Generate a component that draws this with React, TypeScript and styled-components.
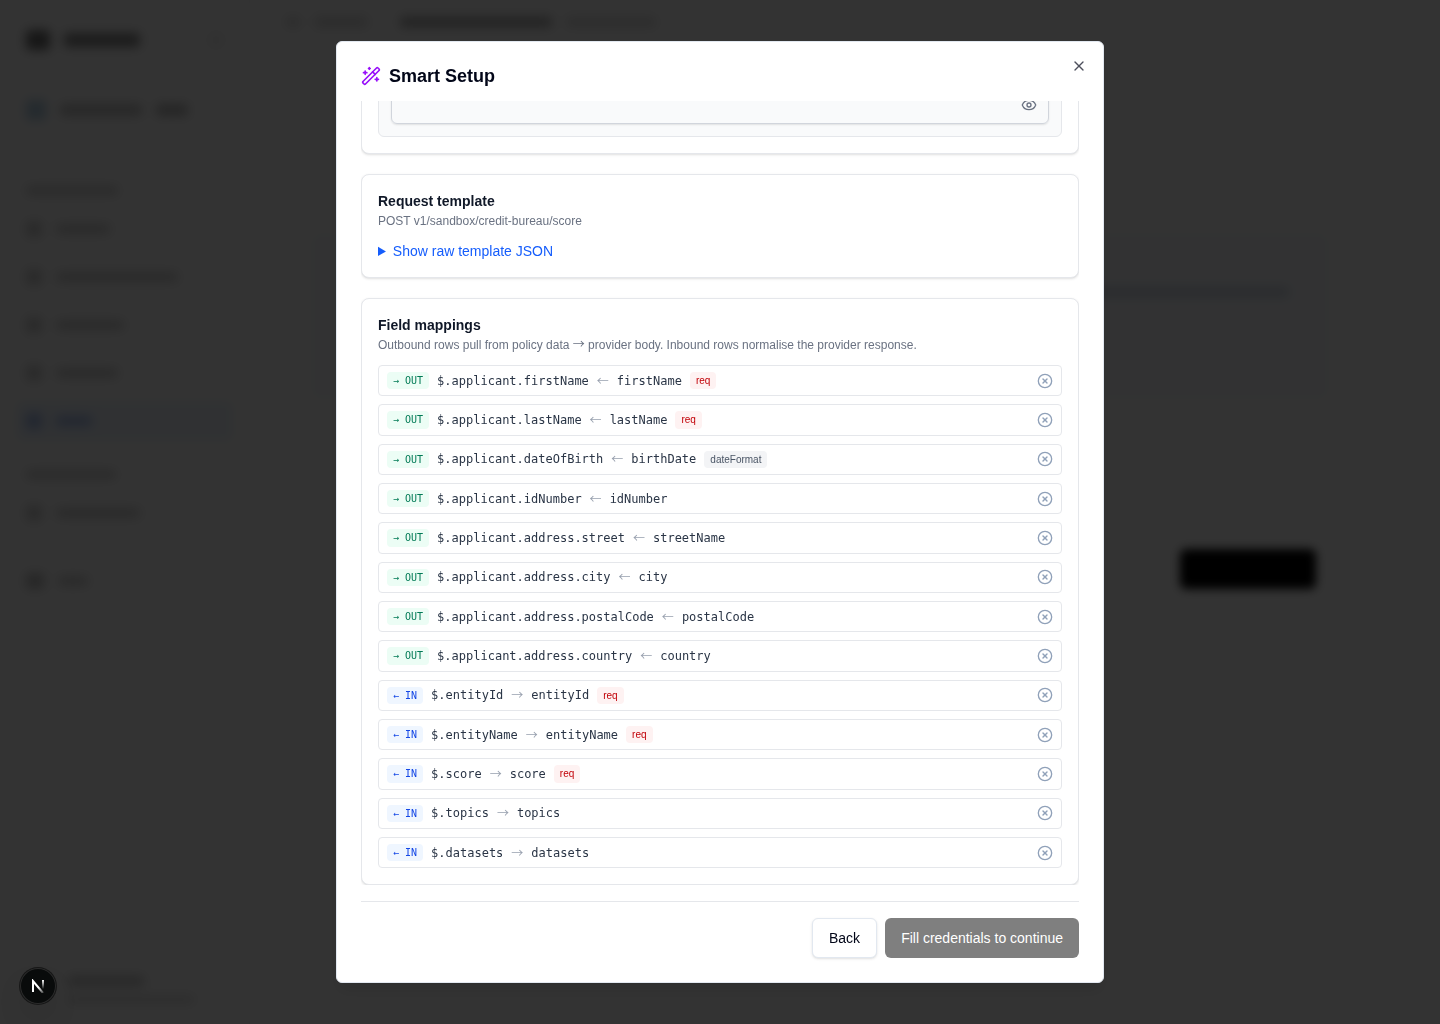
import React, { useLayoutEffect, useRef } from "react";
import styled, { createGlobalStyle } from "styled-components";
import { CircleX, Eye, WandSparkles, X } from "lucide-react";

const SANS = `"Liberation Sans", Arial, sans-serif`;
const MONO = `"DejaVu Sans Mono", "Liberation Mono", monospace`;
const SYMBOLS = `"Noto Sans CJK JP", "Liberation Sans", sans-serif`;

const GlobalStyle = createGlobalStyle`
  *, *::before, *::after { box-sizing: border-box; }
  body { margin: 0; background: #fff; font-family: ${SANS}; font-size: 14px; line-height: 20px; color: #101828; }
  h2, h3, p, ul { margin: 0; padding: 0; }
  button, input { font: inherit; }
`;

/* ---------- page behind the dialog ---------- */

const Page = styled.div`
  display: flex;
  height: 100vh;
  overflow: hidden;
  background: #fff;
`;

const Sidebar = styled.aside`
  display: flex;
  flex-direction: column;
  width: 250px;
  padding: 24px 16px 16px;
  border-right: 1px solid #f3f4f6;
`;

const Line = styled.div<{ $h: number; $active?: boolean; $top?: number }>`
  display: flex;
  align-items: center;
  gap: 14px;
  height: ${(p) => p.$h}px;
  margin-top: ${(p) => p.$top ?? 0}px;
  padding: 0 10px;
  border-radius: 8px;
  background: ${(p) => (p.$active ? "#eff6ff" : "transparent")};
`;

const Blob = styled.span<{ $w: number; $h?: number; $c?: string }>`
  flex: none;
  width: ${(p) => p.$w}px;
  height: ${(p) => p.$h ?? 10}px;
  border-radius: 4px;
  background: ${(p) => p.$c ?? "#d0d0d0"};
  filter: blur(3px);
`;

const Grow = styled.span`
  flex: 1;
`;

const Main = styled.main`
  flex: 1;
  display: flex;
  flex-direction: column;
`;

const TopBar = styled.header`
  display: flex;
  align-items: center;
  gap: 14px;
  height: 44px;
  padding: 0 36px;
`;

const Body = styled.div`
  display: flex;
  flex-direction: column;
  gap: 28px;
  padding: 188px 110px 0 60px;
`;

const Panel = styled.section<{ $h: number; $bg?: string }>`
  display: flex;
  flex-direction: column;
  align-items: flex-end;
  height: ${(p) => p.$h}px;
  padding: 54px 40px 0;
  border: 1px solid #fafafa;
  border-radius: 12px;
  background: ${(p) => p.$bg ?? "#fff"};
`;

const PanelAction = styled.span`
  width: 136px;
  height: 40px;
  margin: 66px -27px 0 0;
  border-radius: 6px;
  background: #000;
  filter: blur(2px);
`;

/* ---------- dialog ---------- */

const Overlay = styled.div`
  position: fixed;
  inset: 0;
  display: flex;
  align-items: center;
  justify-content: center;
  background: rgba(0, 0, 0, 0.8);
  backdrop-filter: blur(4px);
`;

const Dialog = styled.div`
  position: relative;
  display: flex;
  flex-direction: column;
  width: 100%;
  max-width: 768px;
  height: 92vh;
  padding: 24px;
  border: 1px solid #e2e8f0;
  border-radius: 6px;
  background: #fff;
  box-shadow: 0 10px 15px -3px rgba(0, 0, 0, 0.1);
`;

const DialogHeader = styled.div`
  display: flex;
  align-items: center;
  gap: 8px;
  height: 20px;
  margin-bottom: 15px;
  color: #9810fa;
`;

const DialogTitle = styled.h2`
  font-size: 18px;
  line-height: 20px;
  font-weight: 700;
  color: #020618;
`;

const IconButton = styled.button`
  display: flex;
  padding: 0;
  border: 0;
  background: transparent;
  color: #90a1b9;
  cursor: pointer;
`;

const CloseButton = styled(IconButton)`
  position: absolute;
  top: 16px;
  right: 16px;
  color: #020618;
  opacity: 0.7;
`;

const ScrollArea = styled.div`
  flex: 1;
  min-height: 0;
  display: flex;
  flex-direction: column;
  gap: 20px;
  overflow-y: auto;
  scrollbar-width: none;
`;

const Card = styled.section`
  flex: none;
  padding: 16px;
  border: 1px solid #e5e7eb;
  border-radius: 8px;
  background: #fff;
  box-shadow: 0 1px 3px rgba(0, 0, 0, 0.1), 0 1px 2px -1px rgba(0, 0, 0, 0.1);
`;

const CardTitle = styled.h3`
  font-size: 14px;
  line-height: 20px;
  font-weight: 700;
`;

const CardNote = styled.p`
  margin: 2px 0 12px;
  font-size: 12px;
  line-height: 16px;
  color: #6a7282;
`;

const Raw = styled.details`
  font-size: 14px;
  line-height: 20px;
  color: #155dfc;
  summary { cursor: pointer; }
`;

const FieldGroup = styled.div`
  padding: 12px;
  border: 1px solid #e5e7eb;
  border-radius: 6px;
  background: #f9fafb;
`;

const SecretField = styled.div`
  display: flex;
  align-items: center;
  height: 38px;
  padding-right: 11px;
  border: 1px solid #d1d5dc;
  border-radius: 6px;
  box-shadow: 0 1px 2px rgba(0, 0, 0, 0.1);

  button { color: #6a7282; }
`;

const SecretInput = styled.input`
  flex: 1;
  min-width: 0;
  padding: 8px 12px;
  border: 0;
  outline: 0;
  background: transparent;
`;

const Rows = styled.ul`
  display: flex;
  flex-direction: column;
  gap: 8px;
  list-style: none;
`;

const Row = styled.li`
  display: flex;
  align-items: center;
  gap: 8px;
  padding: 6px 8px;
  border: 1px solid #e5e7eb;
  border-radius: 4px;
  font-size: 12px;
  line-height: calc(4 / 3);

  button { margin-left: auto; }
`;

const tones = {
  out: { bg: "#ecfdf5", fg: "#007a55" },
  in: { bg: "#eff6ff", fg: "#1447e6" },
  req: { bg: "#fef2f2", fg: "#c10007" },
  format: { bg: "#f3f4f6", fg: "#4a5565" },
};

const Chip = styled.span<{ $tone: keyof typeof tones; $mono?: boolean }>`
  padding: 2px 6px;
  border-radius: 4px;
  font-family: ${(p) => (p.$mono ? MONO : SANS)};
  font-size: 10px;
  background: ${(p) => tones[p.$tone].bg};
  color: ${(p) => tones[p.$tone].fg};
`;

const Path = styled.code`
  font-family: ${MONO};
  font-size: 12px;
  color: #2a3546;
`;

const Arrow = styled.span`
  font-family: ${SYMBOLS};
  line-height: 16px;
  color: #99a1af;
`;

const InlineArrow = styled.span`
  font-family: ${SYMBOLS};
  line-height: 1;
`;

const Footer = styled.div`
  display: flex;
  justify-content: flex-end;
  gap: 8px;
  margin-top: 16px;
  padding-top: 16px;
  border-top: 1px solid #e5e7eb;
`;

const Button = styled.button<{ $primary?: boolean }>`
  height: 40px;
  padding: 0 16px;
  border: ${(p) => (p.$primary ? "0" : "1px solid #e2e8f0")};
  border-radius: 6px;
  font-size: 14px;
  line-height: 20px;
  background: ${(p) => (p.$primary ? "#000" : "#fff")};
  color: ${(p) => (p.$primary ? "#fff" : "#020618")};
  box-shadow: ${(p) => (p.$primary ? "none" : "0 1px 3px rgba(0, 0, 0, 0.1), 0 1px 2px -1px rgba(0, 0, 0, 0.1)")};

  &:disabled { opacity: 0.5; }
`;

const DevBadge = styled.button`
  position: fixed;
  left: 20px;
  bottom: 20px;
  display: flex;
  align-items: center;
  justify-content: center;
  width: 36px;
  height: 36px;
  padding: 0;
  border: 0;
  border-radius: 50%;
  background: #090b0b;
  box-shadow: 0 0 0 1px #171717, inset 0 0 0 1px #2b2b2b, 0 16px 32px -8px rgba(0, 0, 0, 0.24);
`;

type Mapping = { dir: "out" | "in"; path: string; field: string; required?: boolean; format?: string };

const mappings: Mapping[] = [
  { dir: "out", path: "$.applicant.firstName", field: "firstName", required: true },
  { dir: "out", path: "$.applicant.lastName", field: "lastName", required: true },
  { dir: "out", path: "$.applicant.dateOfBirth", field: "birthDate", format: "dateFormat" },
  { dir: "out", path: "$.applicant.idNumber", field: "idNumber" },
  { dir: "out", path: "$.applicant.address.street", field: "streetName" },
  { dir: "out", path: "$.applicant.address.city", field: "city" },
  { dir: "out", path: "$.applicant.address.postalCode", field: "postalCode" },
  { dir: "out", path: "$.applicant.address.country", field: "country" },
  { dir: "in", path: "$.entityId", field: "entityId", required: true },
  { dir: "in", path: "$.entityName", field: "entityName", required: true },
  { dir: "in", path: "$.score", field: "score", required: true },
  { dir: "in", path: "$.topics", field: "topics" },
  { dir: "in", path: "$.datasets", field: "datasets" },
];

function MappingRow({ dir, path, field, required, format }: Mapping) {
  const out = dir === "out";
  return (
    <Row>
      <Chip $tone={dir} $mono>{out ? "→ OUT" : "← IN"}</Chip>
      <Path>{path}</Path>
      <Arrow>{out ? "←" : "→"}</Arrow>
      <Path>{field}</Path>
      {required && <Chip $tone="req">req</Chip>}
      {format && <Chip $tone="format">{format}</Chip>}
      <IconButton type="button" aria-label={`Remove ${field}`}>
        <CircleX size={16} />
      </IconButton>
    </Row>
  );
}

function Backdrop() {
  return (
    <Page aria-hidden="true">
      <Sidebar>
        <Line $h={32}><Blob $w={24} $h={20} $c="#707070" /><Blob $w={76} $h={14} $c="#8a8a8a" /><Grow /><Blob $w={14} $h={14} $c="#f0f0f0" /></Line>
        <Line $h={52} $top={28}><Blob $w={20} $h={20} $c="#b4d2e6" /><Blob $w={82} $h={12} $c="#c4c4c4" /><Blob $w={32} $h={12} $c="#bababa" /></Line>
        <Line $h={24} $top={42}><Blob $w={92} $h={9} /></Line>
        <Line $h={40} $top={7}><Blob $w={16} $h={16} /><Blob $w={54} /></Line>
        <Line $h={40} $top={8}><Blob $w={16} $h={16} /><Blob $w={122} /></Line>
        <Line $h={40} $top={8}><Blob $w={16} $h={16} /><Blob $w={68} /></Line>
        <Line $h={40} $top={8}><Blob $w={16} $h={16} /><Blob $w={62} /></Line>
        <Line $h={40} $top={8} $active><Blob $w={16} $h={16} $c="#a8bff0" /><Blob $w={36} $c="#a8bff0" /></Line>
        <Line $h={24} $top={21}><Blob $w={90} $h={9} /></Line>
        <Line $h={40} $top={7}><Blob $w={16} $h={16} /><Blob $w={84} /></Line>
        <Line $h={40} $top={28}><Blob $w={18} $h={16} $c="#c0c0c0" /><Blob $w={30} /></Line>
        <Grow />
        <Line $h={18}><Blob $w={28} $h={1} $c="transparent" /><Blob $w={76} $c="#c4c4c4" /></Line>
        <Line $h={18}><Blob $w={28} $h={1} $c="transparent" /><Blob $w={126} $h={7} $c="#d8d8d8" /></Line>
      </Sidebar>
      <Main>
        <TopBar>
          <Blob $w={14} $c="#d8d8d8" /><Blob $w={54} $c="#d8d8d8" /><Blob $w={4} $c="#fff" />
          <Blob $w={152} $c="#a8a8a8" /><Blob $w={90} $c="#dcdcdc" />
        </TopBar>
        <Body>
          <Panel $h={168} $bg="#f9fbff"><Blob $w={210} $c="#cfd7e4" /></Panel>
          <Panel $h={326}><PanelAction /></Panel>
        </Body>
      </Main>
    </Page>
  );
}

export default function App() {
  const scroller = useRef<HTMLDivElement>(null);

  useLayoutEffect(() => {
    const el = scroller.current;
    if (el) el.scrollTop = el.scrollHeight;
  }, []);

  return (
    <>
      <GlobalStyle />
      <Backdrop />
      <Overlay>
        <Dialog role="dialog" aria-modal="true" aria-labelledby="setup-title">
          <DialogHeader>
            <WandSparkles size={20} />
            <DialogTitle id="setup-title">Smart Setup</DialogTitle>
          </DialogHeader>
          <ScrollArea ref={scroller}>
            <Card>
              <FieldGroup>
                <SecretField>
                  <SecretInput type="password" aria-label="Credential" />
                  <IconButton type="button" aria-label="Show value"><Eye size={16} /></IconButton>
                </SecretField>
              </FieldGroup>
            </Card>
            <Card>
              <CardTitle>Request template</CardTitle>
              <CardNote>POST v1/sandbox/credit-bureau/score</CardNote>
              <Raw><summary>Show raw template JSON</summary></Raw>
            </Card>
            <Card>
              <CardTitle>Field mappings</CardTitle>
              <CardNote>Outbound rows pull from policy data <InlineArrow>→</InlineArrow> provider body. Inbound rows normalise the provider response.</CardNote>
              <Rows>
                {mappings.map((m) => <MappingRow key={m.path} {...m} />)}
              </Rows>
            </Card>
          </ScrollArea>
          <Footer>
            <Button type="button">Back</Button>
            <Button type="button" $primary disabled>Fill credentials to continue</Button>
          </Footer>
          <CloseButton type="button" aria-label="Close"><X size={16} /></CloseButton>
        </Dialog>
      </Overlay>
      <DevBadge type="button" aria-label="Open developer tools">
        <svg width="14" height="14" viewBox="0 0 14 14" fill="none">
          <defs>
            <linearGradient id="stem" x1="0" y1="1" x2="0" y2="10" gradientUnits="userSpaceOnUse">
              <stop stopColor="#fff" />
              <stop offset="1" stopColor="#fff" stopOpacity="0" />
            </linearGradient>
            <linearGradient id="slash" x1="8" y1="8" x2="13" y2="14" gradientUnits="userSpaceOnUse">
              <stop stopColor="#fff" />
              <stop offset="1" stopColor="#fff" stopOpacity="0.2" />
            </linearGradient>
          </defs>
          <path d="M2 13V2L12 14" stroke="url(#slash)" strokeWidth="2" />
          <rect x="11" y="1" width="2" height="9" fill="url(#stem)" />
        </svg>
      </DevBadge>
    </>
  );
}
